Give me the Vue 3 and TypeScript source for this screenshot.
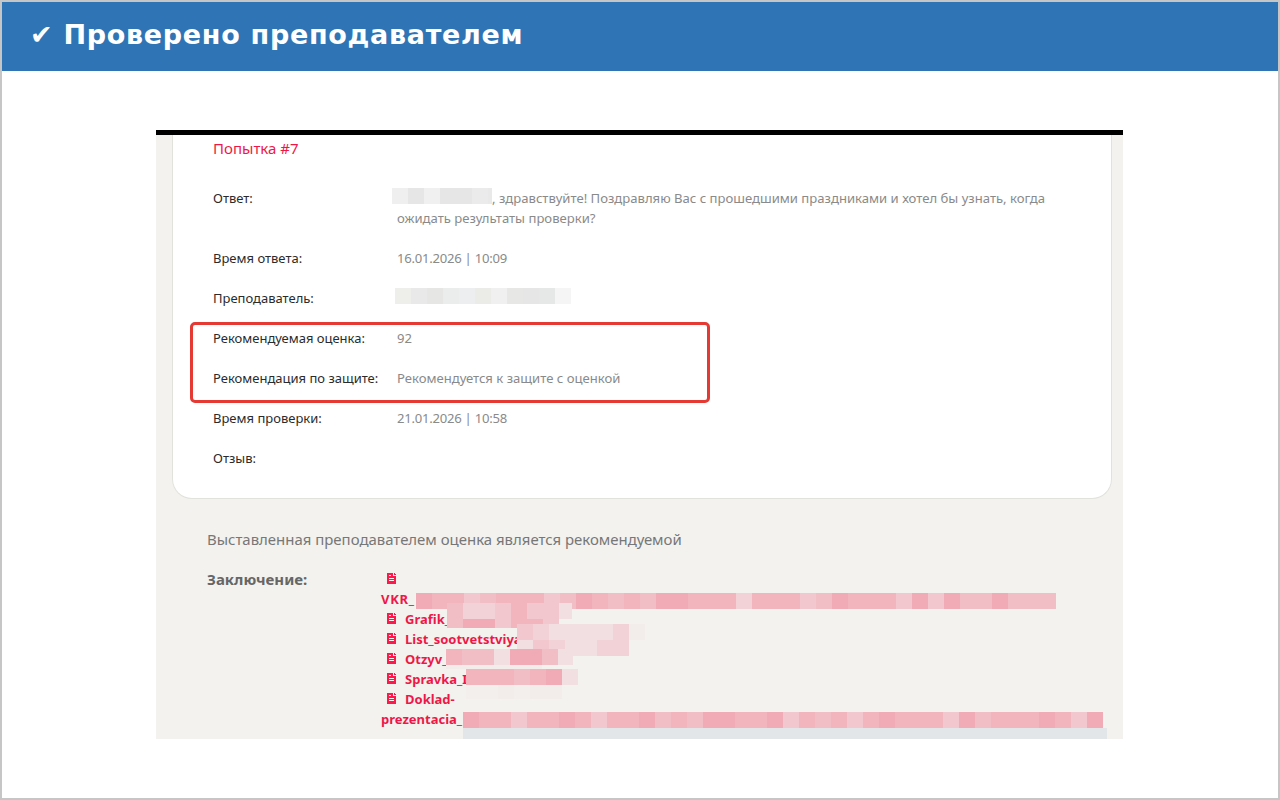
<script setup lang="ts">
type Strip = { w: number; h: number; cells: string };
type Mosaic = { x: number; y: number; strips: Strip[] };

const shades: Record<string, string> = {
  a: '#f0abb6',
  b: '#f2b4bd',
  c: '#f2bec6',
  d: '#f2c8ce',
  e: '#f2d2d6',
  f: '#f2dfe1',
  g: '#f2ecea',
  h: '#f3efec',
};

// sheet with a folded corner and three text lines, cut out on the pixel grid
const fileIcon = 'M0 0h6v3h3v8H0zM2 2v1h2V2zM2 5v1h5V5zM2 7v1h5V7zM7 0l2 2H7z';

const nameCells = ['#efefef', '#e6e6e6', '#f0f0f0', '#e6e6e6', '#e6e6e6', '#ebebeb'];
const teacherCells = ['#eeeeea', '#e8e9e8', '#e6e6e4', '#ebecec', '#eceef0', '#ebebe8', '#eff0ef', '#e7e7e6', '#e6e6e6', '#e6e7e7', '#f5f5f5'];

const files = [
  { name: '', icon: true },
  { name: 'VKR_', icon: false, caps: true },
  { name: 'Grafik_', icon: true },
  { name: 'List_sootvetstviya', icon: true },
  { name: 'Otzyv_', icon: true },
  { name: 'Spravka_I', icon: true },
  { name: 'Doklad-', icon: true },
  { name: 'prezentacia_', icon: false },
];

// offsets are from the top left corner of the file list
const mosaics: Mosaic[] = [
  { x: 35, y: 24, strips: [{ w: 640, h: 16, cells: 'abbdcbbbdcabcbcaabbbebbbdcabbbdadaccaccc' }] },
  {
    x: 66,
    y: 34,
    strips: [
      { w: 125, h: 16, cells: 'ceedbddf' },
      { w: 112, h: 9, cells: 'caadbbd' },
    ],
  },
  {
    x: 136,
    y: 55,
    strips: [
      { w: 128, h: 16, cells: 'deffffeg' },
      { w: 112, h: 16, cells: 'fdeffee' },
    ],
  },
  {
    x: 65,
    y: 80,
    strips: [
      { w: 127, h: 16, cells: 'bccfaacf' },
      { w: 96, h: 4, cells: 'ggggggh' },
    ],
  },
  {
    x: 85,
    y: 100,
    strips: [
      { w: 112, h: 16, cells: 'bbbcbaf' },
      { w: 96, h: 14, cells: 'hhghggh' },
    ],
  },
  { x: 82, y: 143, strips: [{ w: 640, h: 16, cells: 'abbdbbabdbbacbcaabbadbcbdbabbbdacbbbabda' }] },
];

function cellColour(key: string): string {
  return shades[key];
}
</script>

<template>
  <div class="frame">
    <header class="banner">✔ Проверено преподавателем</header>
    <main class="stage">
      <section class="shot">
        <div class="card">
          <h2 class="attempt">Попытка #7</h2>
          <div class="row row--tall">
            <span class="label">Ответ:</span>
            <span class="value">
              <span class="blur blur--name"><i v-for="(c, n) in nameCells" :key="n" :style="{ background: c }"></i><i class="blur__tail"></i></span>, здравствуйте! Поздравляю Вас с прошедшими праздниками и хотел бы узнать, когда ожидать результаты проверки?
            </span>
          </div>
          <div class="row">
            <span class="label">Время ответа:</span>
            <span class="value value--date">16.01.2026 | 10:09</span>
          </div>
          <div class="row">
            <span class="label">Преподаватель:</span>
            <span class="value">
              <span class="blur blur--teacher"><i v-for="(c, n) in teacherCells" :key="n" :style="{ background: c }"></i></span>
            </span>
          </div>
          <div class="highlighted">
            <div class="row">
              <span class="label">Рекомендуемая оценка:</span>
              <span class="value">92</span>
            </div>
            <div class="row">
              <span class="label">Рекомендация по защите:</span>
              <span class="value">Рекомендуется к защите с оценкой</span>
            </div>
            <div class="highlighted__box"></div>
          </div>
          <div class="row">
            <span class="label">Время проверки:</span>
            <span class="value value--date">21.01.2026 | 10:58</span>
          </div>
          <div class="row">
            <span class="label">Отзыв:</span>
            <span class="value"></span>
          </div>
        </div>

        <p class="note">Выставленная преподавателем оценка является рекомендуемой</p>

        <div class="conclusion">
          <span class="conclusion__label">Заключение:</span>
          <div class="files">
            <div v-for="(file, i) in files" :key="i" class="file" :class="{ 'file--caps': file.caps }">
              <svg v-if="file.icon" class="file__icon" viewBox="0 0 9 11" aria-hidden="true">
                <path :d="fileIcon" fill-rule="evenodd" />
              </svg>
              <span>{{ file.name }}</span>
            </div>
            <div
              v-for="(m, i) in mosaics"
              :key="'m' + i"
              class="mosaic"
              :style="{ left: m.x + 'px', top: m.y + 'px' }"
            >
              <div
                v-for="(s, j) in m.strips"
                :key="j"
                class="mosaic__strip"
                :style="{ width: s.w + 'px', height: s.h + 'px' }"
              >
                <i
                  v-for="(c, k) in s.cells"
                  :key="k"
                  :style="{ background: cellColour(c) }"
                ></i>
              </div>
            </div>
            <div class="files__fade"></div>
          </div>
        </div>
      </section>
    </main>
  </div>
</template>

<style scoped>
.frame {
  box-sizing: border-box;
  width: 1280px;
  height: 800px;
  border: 2px solid #c6c6c6;
  background: #ffffff;
  overflow: hidden;
}

.banner {
  box-sizing: border-box;
  height: 69px;
  padding-left: 28px;
  background: #2f75b5;
  color: #ffffff;
  font-family: 'DejaVu Sans', sans-serif;
  font-size: 27px;
  font-weight: 700;
  line-height: 66px;
  letter-spacing: 0.7px;
}

.stage {
  padding: 59px 0 0 154px;
}

.shot {
  box-sizing: border-box;
  width: 967px;
  height: 609px;
  border-top: 5px solid #000000;
  background: #f3f2ee;
  overflow: hidden;
  font-family: 'Noto Sans', sans-serif;
}

.card {
  box-sizing: border-box;
  width: 940px;
  height: 364px;
  margin-left: 16px;
  padding: 0 40px;
  background: #ffffff;
  border: 1px solid #e2e2dd;
  border-top: 0;
  border-radius: 0 0 20px 20px;
}

.attempt {
  height: 43px;
  margin: 0;
  color: #ee1848;
  font-size: 15px;
  font-weight: 400;
  line-height: 26px;
}

.row {
  display: grid;
  grid-template-columns: 184px 1fr;
  padding: 10px 0;
  font-size: 13px;
  line-height: 20px;
}

.label {
  color: #2b2b2b;
}

.value {
  width: 660px;
  color: #8a8a8a;
  font-size: 13.1px;
}

.value--date {
  letter-spacing: -0.25px;
}

.blur {
  display: inline-flex;
  vertical-align: top;
  height: 16px;
}

.blur i {
  display: block;
  width: 16px;
  height: 16px;
}

.blur--name {
  width: 100px;
  margin-left: -5px;
}

.blur .blur__tail {
  width: 4px;
  background: #e9e9e9;
}

.blur--teacher {
  margin-left: -2px;
}

.highlighted {
  position: relative;
}

.highlighted__box {
  position: absolute;
  left: -23px;
  top: 4px;
  width: 520px;
  height: 81px;
  box-sizing: border-box;
  border: 3px solid #e53a33;
  border-radius: 5px;
}

.note {
  margin: 30px 0 0 51px;
  color: #777777;
  font-size: 14.95px;
  line-height: 20px;
}

.conclusion {
  display: grid;
  grid-template-columns: 174px 1fr;
  margin: 20px 0 0 51px;
  color: #666666;
  font-size: 15px;
  line-height: 20px;
}

.conclusion__label {
  font-weight: 700;
}

.files {
  position: relative;
  color: #ee1848;
  font-size: 13px;
  font-weight: 700;
}

.file {
  display: flex;
  align-items: center;
  height: 20px;
}

.file--caps {
  letter-spacing: 0.7px;
}

.file:has(svg) span {
  margin-left: 9px;
}

.file__icon {
  flex: none;
  width: 9px;
  height: 11px;
  margin: -1px 0 0 6px;
  fill: #fb1a4b;
  shape-rendering: crispEdges;
}

.mosaic {
  position: absolute;
}

.mosaic__strip {
  display: flex;
  overflow: hidden;
}

.mosaic__strip i {
  flex: 0 0 16px;
  height: 100%;
}

.files__fade {
  position: absolute;
  left: 82px;
  top: 159px;
  width: 644px;
  height: 11px;
  background: #e3e6e9;
}
</style>

<style>
html,
body {
  margin: 0;
  background: #ffffff;
}
</style>
